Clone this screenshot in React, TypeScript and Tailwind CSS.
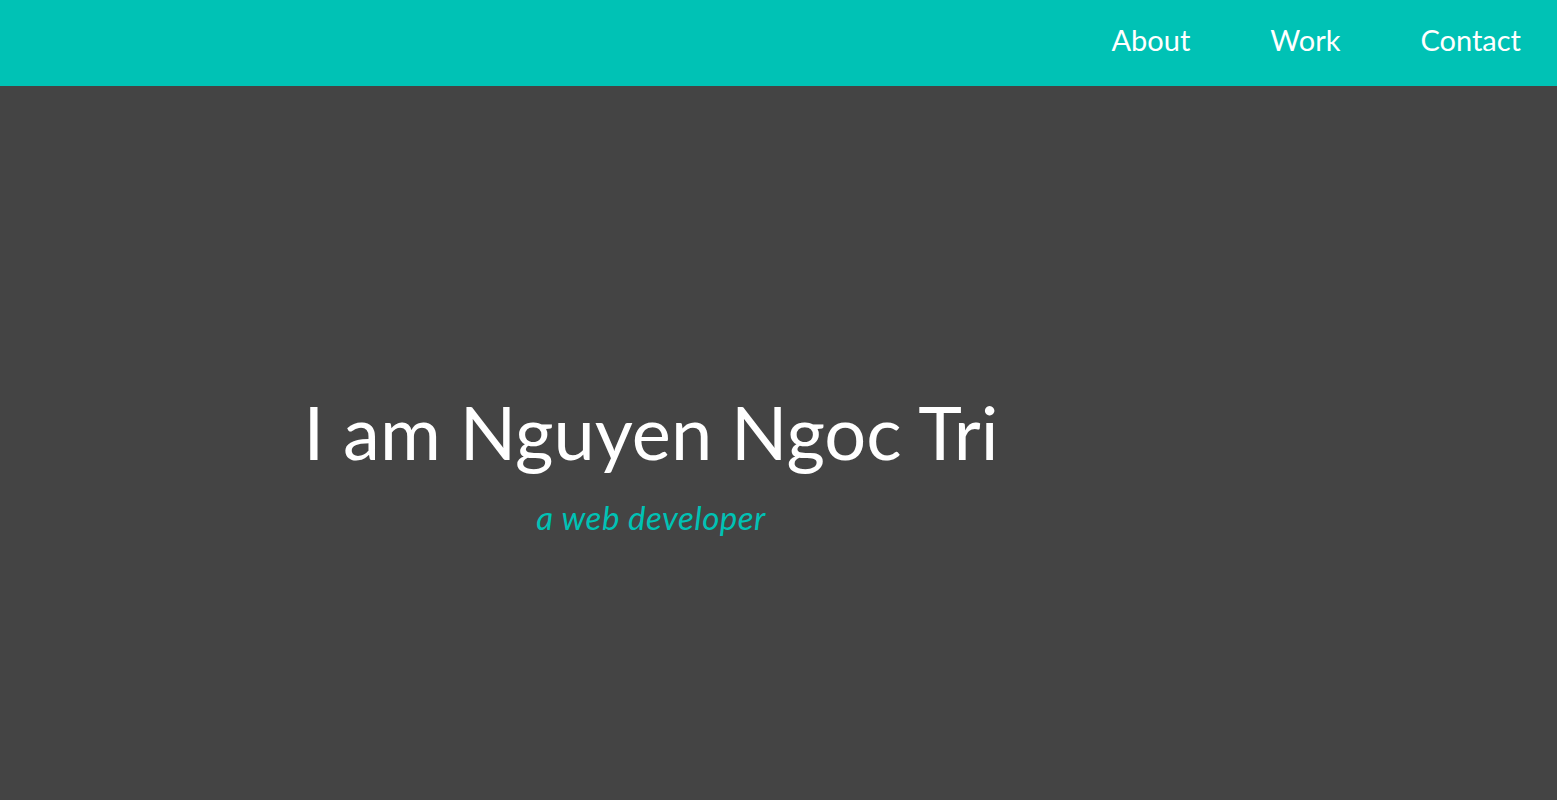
export default function App() {
  return (
    <div className="min-h-screen bg-[#444444] font-['Lato','Open_Sans',sans-serif]">
      <header className="h-[86px] bg-[#00c2b5] flex items-center justify-end pr-[36px] pb-[6px]">
        <nav className="flex items-center gap-[80px] text-[29px] text-white">
          <a href="#about">About</a>
          <a href="#work">Work</a>
          <a href="#contact">Contact</a>
        </nav>
      </header>
      <section className="h-[714px] flex">
        <div className="w-[1302px] flex flex-col items-center justify-center pb-[20px] pt-[72px]">
          <h1 className="text-[74px] leading-none text-white">I am Nguyen Ngoc Tri</h1>
          <p className="mt-[24px] text-[33px] italic tracking-[0.5px] text-[#00c2b5]">a web developer</p>
        </div>
      </section>
    </div>
  );
}
